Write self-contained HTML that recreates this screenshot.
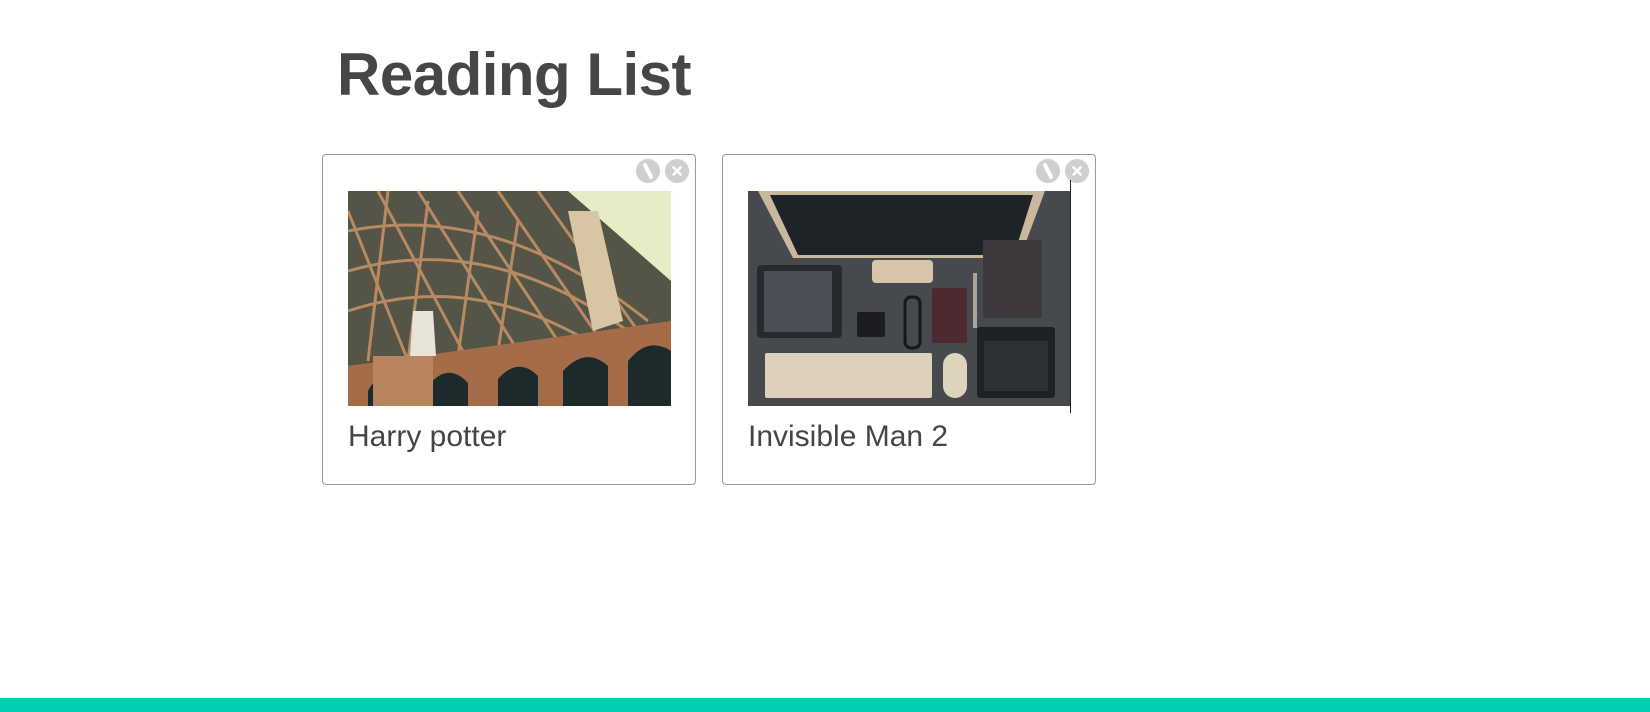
<!DOCTYPE html>
<html><head><meta charset="utf-8"><style>
html,body{margin:0;padding:0;background:#fff;width:1650px;height:712px;overflow:hidden;position:relative;font-family:"Liberation Sans",sans-serif}
h1{position:absolute;left:337px;top:40px;margin:0;font-size:60px;font-weight:bold;color:#464646;letter-spacing:-0.5px}
.card{position:absolute;top:154px;width:372px;height:329px;border:1px solid #9a9a9a;border-radius:4px;background:#fff}
.img{position:absolute;left:25px;top:36px;width:323px;height:215px}
.t{position:absolute;left:25px;top:265px;font-size:30px;color:#454545}
.ic{position:absolute;top:4px;width:24px;height:24px;border-radius:50%;background:#cfcfcf}
.bar{position:absolute;left:0;top:698px;width:1650px;height:14px;background:#00cdb1}
</style></head><body>
<h1>Reading List</h1>

<div class="card" style="left:322px">
 <svg class="ic" style="left:313px" viewBox="0 0 24 24"><circle cx="12" cy="12" r="12" fill="#cfcfcf"/><path d="M9 6 L15 18" stroke="#fff" stroke-width="4" stroke-linecap="round"/></svg>
 <svg class="ic" style="left:342px" viewBox="0 0 24 24"><circle cx="12" cy="12" r="12" fill="#cfcfcf"/><path d="M8.5 8.5 L15.5 15.5 M15.5 8.5 L8.5 15.5" stroke="#fff" stroke-width="2.6" stroke-linecap="round"/></svg>
 <svg class="img" viewBox="0 0 323 215" preserveAspectRatio="none">
  <rect width="323" height="215" fill="#e6ecc6"/>
  <path d="M0 0 H220 L323 90 V140 L0 175 Z" fill="#3a3a30" opacity="0.85"/>
  <g stroke="#b88a62" stroke-width="3" fill="none">
   <path d="M0 40 Q150 10 300 130"/><path d="M0 80 Q140 40 280 140"/><path d="M0 120 Q120 80 240 150"/>
   <path d="M30 0 L120 170 M70 0 L170 160 M110 0 L210 150 M150 0 L250 145 M190 0 L290 140"/>
   <path d="M0 20 L60 170 M40 0 L20 170 M80 10 L60 170 M130 20 L110 165 M170 30 L150 160"/>
  </g>
  <path d="M220 20 L250 20 L275 130 L245 140 Z" fill="#d8c5a4"/>
  <path d="M0 175 L323 130 V215 H0 Z" fill="#a46c48"/>
  <g fill="#1d2a2c">
   <path d="M20 215 V200 Q30 180 40 200 V215Z"/><path d="M80 215 V195 Q100 170 120 192 V215Z"/>
   <path d="M150 215 V188 Q170 165 190 185 V215Z"/><path d="M215 215 V180 Q238 155 260 175 V215Z"/>
   <path d="M280 215 V170 Q300 145 323 160 V215Z"/>
  </g>
  <path d="M65 120 L85 120 L88 165 L62 165 Z" fill="#e8e4d8"/>
  <rect x="25" y="165" width="60" height="50" fill="#b98560"/>
 </svg>
 <div class="t">Harry potter</div>
</div>

<div class="card" style="left:722px">
 <svg class="ic" style="left:313px" viewBox="0 0 24 24"><circle cx="12" cy="12" r="12" fill="#cfcfcf"/><path d="M9 6 L15 18" stroke="#fff" stroke-width="4" stroke-linecap="round"/></svg>
 <svg class="ic" style="left:342px" viewBox="0 0 24 24"><circle cx="12" cy="12" r="12" fill="#cfcfcf"/><path d="M8.5 8.5 L15.5 15.5 M15.5 8.5 L8.5 15.5" stroke="#fff" stroke-width="2.6" stroke-linecap="round"/></svg>
 <svg class="img" viewBox="0 0 323 215" preserveAspectRatio="none">
  <rect width="323" height="215" fill="#46494d"/>
  <path d="M10 0 H297 L272 67 H45 Z" fill="#c9b89e"/>
  <path d="M22 4 H285 L266 64 H50 Z" fill="#1e2327"/>
  <rect x="124" y="69" width="61" height="23" rx="4" fill="#d8c4a8"/>
  <rect x="9" y="74" width="85" height="73" rx="4" fill="#26292d"/>
  <rect x="16" y="80" width="68" height="61" fill="#4a4f55"/>
  <rect x="109" y="121" width="28" height="25" rx="2" fill="#1b1d20"/>
  <rect x="157" y="106" width="15" height="51" rx="6" fill="none" stroke="#151719" stroke-width="3"/>
  <rect x="184" y="97" width="35" height="55" rx="2" fill="#4c2a30"/>
  <rect x="225" y="82" width="4" height="55" fill="#a9a39a"/>
  <rect x="235" y="49" width="59" height="78" rx="2" fill="#3d393c"/>
  <rect x="229" y="136" width="78" height="71" rx="3" fill="#1e2124"/>
  <rect x="236" y="150" width="64" height="50" fill="#2d3034"/>
  <rect x="17" y="162" width="167" height="45" rx="2" fill="#ddd1bd"/>
  <rect x="195" y="162" width="24" height="45" rx="12" fill="#ded3bd"/>
 </svg>
 <div style="position:absolute;left:347px;top:25px;width:1px;height:233px;background:#222"></div>
 <div class="t">Invisible Man 2</div>
</div>

<div class="bar"></div>
</body></html>
